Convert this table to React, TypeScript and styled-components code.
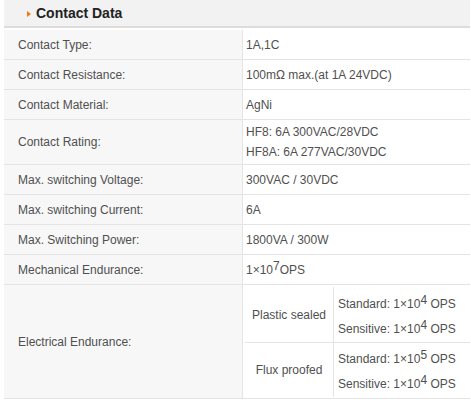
import React from "react";
import styled, { createGlobalStyle } from "styled-components";

const Global = createGlobalStyle`
  html, body { margin: 0; padding: 0; background: #ffffff; }
  body { font-family: "Liberation Sans", Arial, sans-serif; }
`;

const Page = styled.div`
  width: 466px;
  padding-left: 4px;
`;

const Header = styled.div`
  height: 26px;
  background: #f2f2f2;
  border-bottom: 2px solid #dcdcdc;
  display: flex;
  align-items: center;
  padding-left: 23px;
  gap: 5px;
  margin-bottom: 2px;
`;

const Arrow = styled.span`
  width: 0;
  height: 0;
  border-top: 3px solid transparent;
  border-bottom: 3px solid transparent;
  border-left: 4px solid #f07b10;
  margin-top: 1px;
`;

const Title = styled.h2`
  margin: 0;
  font-size: 14px;
  font-weight: bold;
  color: #222222;
`;

const Table = styled.div`
  display: flex;
  flex-direction: column;
`;

const Row = styled.div<{ $h: number }>`
  display: grid;
  grid-template-columns: 239px 1fr;
  height: ${(p) => p.$h}px;
  border-bottom: 1px solid #e4e4e4;
  box-sizing: border-box;
  font-size: 12px;
  color: #505050;
`;

const Label = styled.div`
  background: #f7f7f7;
  border-right: 1px solid #e4e4e4;
  display: flex;
  align-items: center;
  padding-left: 14px;
`;

const Value = styled.div`
  display: flex;
  flex-direction: column;
  justify-content: center;
  padding-left: 3px;
  line-height: 20px;
`;

const Sup = styled.sup`
  font-size: 12px;
  line-height: 0;
  vertical-align: 4px;
`;

const Inner = styled.div`
  display: flex;
  flex-direction: column;
  padding-top: 2px;
`;

const InnerRow = styled.div<{ $h: number; $last?: boolean }>`
  height: ${(p) => p.$h}px;
  box-sizing: border-box;
  display: grid;
  grid-template-columns: 89px 1fr;
  border-bottom: ${(p) => (p.$last ? "none" : "1px solid #e4e4e4")};
  margin-left: 2px;
`;

const InnerLabel = styled.div`
  border-right: 1px solid #e4e4e4;
  display: flex;
  align-items: center;
  justify-content: center;
`;

const InnerValues = styled.div`
  display: flex;
  flex-direction: column;
  justify-content: center;
  padding-left: 4px;
  padding-top: 4px;
  line-height: 25px;
`;

type Item = { label: string; h: number; value: React.ReactNode };

const items: Item[] = [
  { label: "Contact Type:", h: 30, value: <span>1A,1C</span> },
  { label: "Contact Resistance:", h: 30, value: <span>100mΩ max.(at 1A 24VDC)</span> },
  { label: "Contact Material:", h: 30, value: <span>AgNi</span> },
  {
    label: "Contact Rating:",
    h: 45,
    value: (
      <>
        <span>HF8: 6A 300VAC/28VDC</span>
        <span>HF8A: 6A 277VAC/30VDC</span>
      </>
    ),
  },
  { label: "Max. switching Voltage:", h: 30, value: <span>300VAC / 30VDC</span> },
  { label: "Max. switching Current:", h: 30, value: <span>6A</span> },
  { label: "Max. Switching Power:", h: 30, value: <span>1800VA / 300W</span> },
  {
    label: "Mechanical Endurance:",
    h: 30,
    value: (
      <span>
        1×10<Sup>7</Sup>OPS
      </span>
    ),
  },
];

const ops = (kind: string, exp: number) => (
  <span>
    {kind}: 1×10<Sup>{exp}</Sup> OPS
  </span>
);

export default function App() {
  return (
    <Page>
      <Global />
      <Header>
        <Arrow />
        <Title>Contact Data</Title>
      </Header>
      <Table>
        {items.map((it) => (
          <Row key={it.label} $h={it.h}>
            <Label>{it.label}</Label>
            <Value>{it.value}</Value>
          </Row>
        ))}
        <Row $h={114}>
          <Label>Electrical Endurance:</Label>
          <Inner>
            <InnerRow $h={56}>
              <InnerLabel>Plastic sealed</InnerLabel>
              <InnerValues>
                {ops("Standard", 4)}
                {ops("Sensitive", 4)}
              </InnerValues>
            </InnerRow>
            <InnerRow $h={54} $last>
              <InnerLabel>Flux proofed</InnerLabel>
              <InnerValues>
                {ops("Standard", 5)}
                {ops("Sensitive", 4)}
              </InnerValues>
            </InnerRow>
          </Inner>
        </Row>
      </Table>
    </Page>
  );
}
